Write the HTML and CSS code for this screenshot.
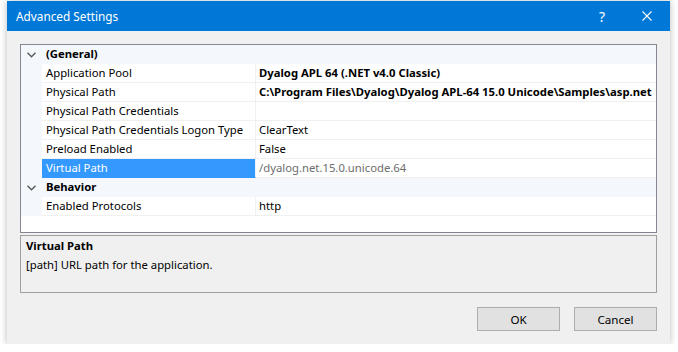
FILE: index.html
```html
<!DOCTYPE html>
<html lang="en">
<head>
    <meta charset="UTF-8">
    <title>Advanced Settings</title>
    <link rel="stylesheet" href="styles.css">
</head>
<body>
<div class="window">
    <div class="titlebar">
        <span class="title">Advanced Settings</span>
        <span class="help">?</span>
        <svg class="close" width="10" height="10" viewBox="0 0 10 10">
            <path d="M0.5 0.5 L9.5 9.5 M9.5 0.5 L0.5 9.5" stroke="#fff" stroke-width="1.1"/>
        </svg>
    </div>
    <div class="content">
        <div class="grid">
            <div class="row cat">
                <div class="gutter"><svg width="9" height="6" viewBox="0 0 9 6"><path d="M0.5 0.8 L4.5 4.8 L8.5 0.8" fill="none" stroke="#555" stroke-width="1.3"/></svg></div>
                <div class="catname">(General)</div>
            </div>
            <div class="row">
                <div class="gutter"></div>
                <div class="name">Application Pool</div>
                <div class="value bold">Dyalog APL 64 (.NET v4.0 Classic)</div>
            </div>
            <div class="row">
                <div class="gutter"></div>
                <div class="name">Physical Path</div>
                <div class="value bold">C:\Program Files\Dyalog\Dyalog APL-64 15.0 Unicode\Samples\asp.net</div>
            </div>
            <div class="row">
                <div class="gutter"></div>
                <div class="name">Physical Path Credentials</div>
                <div class="value"></div>
            </div>
            <div class="row">
                <div class="gutter"></div>
                <div class="name">Physical Path Credentials Logon Type</div>
                <div class="value">ClearText</div>
            </div>
            <div class="row">
                <div class="gutter"></div>
                <div class="name">Preload Enabled</div>
                <div class="value">False</div>
            </div>
            <div class="row">
                <div class="gutter"></div>
                <div class="name selected">Virtual Path</div>
                <div class="value readonly">/dyalog.net.15.0.unicode.64</div>
            </div>
            <div class="row cat">
                <div class="gutter"><svg width="9" height="6" viewBox="0 0 9 6"><path d="M0.5 0.8 L4.5 4.8 L8.5 0.8" fill="none" stroke="#555" stroke-width="1.3"/></svg></div>
                <div class="catname">Behavior</div>
            </div>
            <div class="row">
                <div class="gutter"></div>
                <div class="name">Enabled Protocols</div>
                <div class="value">http</div>
            </div>
        </div>
        <div class="desc">
            <div class="desc-title">Virtual Path</div>
            <div>[path] URL path for the application.</div>
        </div>
        <div class="buttons">
            <button>OK</button>
            <button>Cancel</button>
        </div>
    </div>
    <div class="grip"></div>
</div>
</body>
</html>
```

FILE: styles.css
```css
body { margin: 0; background: #fff; font-family: 'Noto Sans', 'Open Sans', sans-serif; font-size: 11.3px; color: #000; }

.window {
    position: relative;
    margin: 1px 0 0 7px; width: 663px; height: 343px;
    background: #f0f0f0; box-shadow: 0 0 7px rgba(0,0,0,0.28);
    display: flex; flex-direction: column;
}
.titlebar {
    height: 30px; background: #0078d7; color: #fff;
    display: flex; align-items: center; padding-left: 9px; font-size: 11.8px;
}
.title { flex: 1; }
.help { font-size: 14px; margin-right: 37px; }
.close { margin-right: 18px; }

.content { padding: 13px 13px 0 13px; }

.grid {
    height: 187px; border: 1px solid #828790; background: #fff;
}
.row { display: flex; height: 19px; }
.gutter {
    width: 21px; background: #f4f7fc; display: flex; align-items: center; justify-content: center;
    box-sizing: border-box;
}
.gutter svg { margin-left: -1px; }
.name, .value, .catname {
    border-bottom: 1px solid #f0f0f0; box-sizing: border-box; line-height: 18px;
    padding-left: 4px; white-space: nowrap; overflow: hidden;
}
.name { width: 214px; border-right: 1px solid #f0f0f0; }
.value { flex: 1; padding-left: 3px; }
.cat { background: #f4f7fc; }
.catname { flex: 1; font-weight: bold; border-bottom-color: #f4f7fc; }
.bold { font-weight: bold; }
.selected { background: #3399ff; color: #fff; border-bottom-color: #3399ff; }
.readonly { color: #6d6d6d; }

.desc {
    margin-top: 2px; height: 58px; box-sizing: border-box;
    border: 1px solid #a0a0a0; padding: 0 5px;
    line-height: 19px;
}
.desc-title { font-weight: bold; }

.buttons { display: flex; justify-content: flex-end; gap: 14px; margin-top: 14px; }
button {
    width: 83px; height: 24px; background: #e1e1e1; border: 1px solid #adadad;
    font-family: inherit; font-size: 11.6px; padding: 0; color: #000;
}

.grip {
    position: absolute; right: 3px; bottom: 2px; width: 6px; height: 6px;
    background: radial-gradient(circle, #b8b8b8 40%, transparent 45%) 0 0 / 2px 2px;
    clip-path: polygon(100% 0, 100% 100%, 0 100%);
}
```
